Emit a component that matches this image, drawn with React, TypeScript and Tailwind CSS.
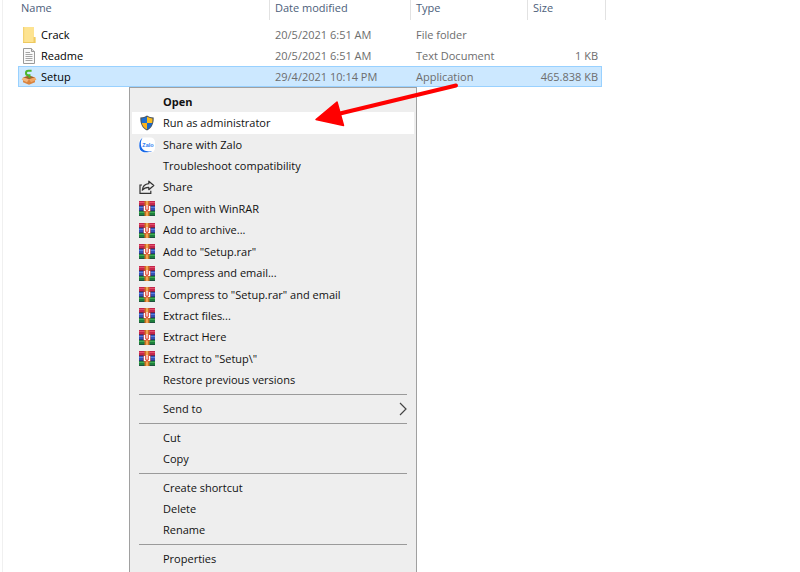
import { Fragment } from 'react';
import type { ReactNode } from 'react';
import clsx from 'clsx';

interface FileRow {
  name: string;
  modified: string;
  type: string;
  size: string;
  icon: ReactNode;
  selected?: boolean;
}

interface MenuEntry {
  label: string;
  icon?: ReactNode;
  bold?: boolean;
  active?: boolean;
  submenu?: boolean;
}

interface MenuGroup {
  height: string;
  items: MenuEntry[];
}

const FolderIcon = () => (
  <svg viewBox="0 0 14 16" className="h-4 w-3.5 shrink-0" aria-hidden="true">
    <path d="M1 0h11v10.500h1.500V16H1z" fill="#fde391" />
    <path d="M1 0h1.200v16H1z" fill="#f3d271" />
    <path d="M11.500 10h2v6h-2z" fill="#f0cb62" />
    <path d="M1 15h12v1H1z" fill="#edc95f" />
  </svg>
);

const TextIcon = () => (
  <svg viewBox="0 0 14 16" className="h-4 w-3.5 shrink-0" aria-hidden="true">
    <path d="M1.500.5h8l3 3v12h-11z" fill="#fafafa" stroke="#9a9a9a" />
    <path d="M9.500.5v3h3" fill="#ddd" stroke="#9a9a9a" />
    <path d="M3.500 4.500H8M3.500 6.500h7M3.500 8.500h7M3.500 10.500h7M3.500 12.500h7" stroke="#a5a5a5" />
  </svg>
);

const SetupIcon = () => (
  <svg viewBox="0 0 14 16" className="h-4 w-3.5 shrink-0 overflow-visible" aria-hidden="true">
    <path d="M1 8.500 7 7l6 1.500v4.800L7 15.800l-6-2.500z" fill="#d98440" />
    <path d="M1 8.500 7 10.500l6-2L7 6.500z" fill="#a3602c" />
    <path d="M1 8.200 7 10.200l-2 3L-.4 10.800z" fill="#f2b57c" />
    <path d="M13 8.200 7 10.200l2 3 5.400-2.400z" fill="#efa766" />
    <path d="M9.600 1.800H6.400C4.600 1.800 4 2.700 4 4s.8 2.200 2.200 2.200h1.300v2.500" fill="none" stroke="#4cb52c" strokeWidth="2" />
  </svg>
);

const ShieldIcon = () => (
  <svg viewBox="0 0 15 16" className="h-4 w-4" aria-hidden="true">
    <path d="M7.500.4C5.800 1.700 3.600 2.300.8 2.400c-.2 6 1.700 10.500 6.700 13.200 5-2.700 6.900-7.200 6.700-13.200C11.400 2.300 9.200 1.700 7.500.4z" fill="#4a5560" />
    <path d="M7.500 1.800v6.200H2.300C2 6.500 2 5 2 3.400c2.200-.1 4-.7 5.500-1.600z" fill="#1e6fd0" />
    <path d="M7.500 1.800v6.200h5.200c.3-1.500.3-3 .3-4.600-2.200-.1-4-.7-5.500-1.600z" fill="#fbbd1e" />
    <path d="M7.500 14.400V8H2.300c.6 2.900 2.200 5 5.200 6.400z" fill="#fbb31a" />
    <path d="M7.500 14.400V8h5.200c-.6 2.900-2.200 5-5.200 6.400z" fill="#1c67c6" />
  </svg>
);

const ZaloIcon = () => (
  <svg viewBox="0 0 16 16" className="h-4 w-4" aria-hidden="true">
    <rect x="0" y=".5" width="16" height="15" rx="4.500" fill="#fff" />
    <path d="M3.500.8C1 2.500.3 5 .3 8.500c0 4.500 2 6.800 6 6.800 3 0 5 0 7-1.200-3 .6-6.300.4-8.300-.8C1.500 11 .8 5 3.500.8z" fill="#1668e8" />
    <text x="9" y="9.500" textAnchor="middle" fontSize="5.500" fontWeight="700" fill="#2f7df0" className="font-['Liberation_Sans',sans-serif]">
      Zalo
    </text>
  </svg>
);

const ShareIcon = () => (
  <svg viewBox="0 0 16 16" className="h-4 w-4" fill="none" stroke="#333" strokeWidth="1.200" aria-hidden="true">
    <path d="M3 6H1v8.400h10.800v-2.600" />
    <path d="M9.800 2.200 14.800 6.500l-5 4.200V8.300C7 8.200 5 9 3.300 11.200 3.700 7.500 6.200 5 9.800 4.700z" strokeLinejoin="round" />
  </svg>
);

const WinRarIcon = () => (
  <svg viewBox="0 0 16 15" className="h-[15px] w-4" aria-hidden="true">
    <path d="M0 0h16v5H0z" fill="#c5264c" />
    <path d="M0 1h16v1H0z" fill="#e2506a" />
    <path d="M0 5h16v5H0z" fill="#3450b4" />
    <path d="M0 6h16v1H0z" fill="#5a80dd" />
    <path d="M0 10h16v5H0z" fill="#1e7f3c" />
    <path d="M0 11h16v1H0z" fill="#42ab55" />
    <path d="M0 4.500h16M0 9.500h16M0 14.500h16" stroke="#1e2440" strokeOpacity=".5" />
    <path d="M5.500 0h5v15h-5z" fill="#cf6f22" />
    <path d="M7 0h2v15H7z" fill="#efa552" />
    <path d="M4.500 4.500h7v6h-7z" fill="#e0523f" />
    <path d="M5.500 5v4.500h1.300M10.500 5v4.500H9.200M8 4v4.500" fill="none" stroke="#fff" strokeWidth="1.200" />
  </svg>
);

const files: FileRow[] = [
  { name: 'Crack', modified: '20/5/2021 6:51 AM', type: 'File folder', size: '', icon: <FolderIcon /> },
  { name: 'Readme', modified: '20/5/2021 6:51 AM', type: 'Text Document', size: '1 KB', icon: <TextIcon /> },
  { name: 'Setup', modified: '29/4/2021 10:14 PM', type: 'Application', size: '465.838 KB', icon: <SetupIcon />, selected: true },
];

const menuGroups: MenuGroup[] = [
  {
    height: 'min-h-[300px]',
    items: [
      { label: 'Open', bold: true },
      { label: 'Run as administrator', icon: <ShieldIcon />, active: true },
      { label: 'Share with Zalo', icon: <ZaloIcon /> },
      { label: 'Troubleshoot compatibility' },
      { label: 'Share', icon: <ShareIcon /> },
      { label: 'Open with WinRAR', icon: <WinRarIcon /> },
      { label: 'Add to archive...', icon: <WinRarIcon /> },
      { label: 'Add to "Setup.rar"', icon: <WinRarIcon /> },
      { label: 'Compress and email...', icon: <WinRarIcon /> },
      { label: 'Compress to "Setup.rar" and email', icon: <WinRarIcon /> },
      { label: 'Extract files...', icon: <WinRarIcon /> },
      { label: 'Extract Here', icon: <WinRarIcon /> },
      { label: 'Extract to "Setup\\"', icon: <WinRarIcon /> },
      { label: 'Restore previous versions' },
    ],
  },
  { height: 'min-h-[22px]', items: [{ label: 'Send to', submenu: true }] },
  { height: 'min-h-[43px]', items: [{ label: 'Cut' }, { label: 'Copy' }] },
  { height: 'min-h-[64px]', items: [{ label: 'Create shortcut' }, { label: 'Delete' }, { label: 'Rename' }] },
  { height: 'min-h-[22px]', items: [{ label: 'Properties' }] },
];

const FileTable = () => {
  const headCell = 'h-[19px] border-r border-[#e2e2e2] p-0 pb-1 pl-[5px] text-left font-normal';

  return (
    <table className="w-[588px] table-fixed border-separate border-spacing-0">
      <colgroup>
        <col className="w-[252px]" />
        <col className="w-[141px]" />
        <col className="w-[117px]" />
        <col className="w-[74px]" />
        <col className="w-1" />
      </colgroup>
      <thead className="text-[#4c607a]">
        <tr>
          <th className="h-[19px] border-r border-[#e2e2e2] p-0 pb-1 pl-[3px] text-left font-normal">Name</th>
          <th className={headCell}>Date modified</th>
          <th className={headCell}>Type</th>
          <th colSpan={2} className={headCell}>Size</th>
        </tr>
        <tr aria-hidden="true">
          <td className="h-1 p-0" />
        </tr>
      </thead>
      <tbody className="text-[#6d6d6d]">
        {files.map((file) => {
          const cell = clsx('h-[21px] border-y p-0', file.selected ? 'border-[#99d1ff] bg-[#cce8ff]' : 'border-transparent');
          return (
            <tr key={file.name}>
              <td className={clsx(cell, 'border-l pl-[3px]')}>
                <div className="flex items-center gap-[5px] text-black">
                  {file.icon}
                  {file.name}
                </div>
              </td>
              <td className={clsx(cell, 'pl-[5px]')}>{file.modified}</td>
              <td className={clsx(cell, 'pl-[5px]')}>{file.type}</td>
              <td className={clsx(cell, 'border-r pr-[3px] text-right')}>{file.size}</td>
            </tr>
          );
        })}
      </tbody>
    </table>
  );
};

const MenuItem = ({ label, icon, bold, active, submenu }: MenuEntry) => (
  <button
    type="button"
    role="menuitem"
    className={clsx('flex w-full items-center gap-2 px-[7px] text-left', bold && 'font-bold', active && 'bg-white')}
  >
    <span className="flex w-4 shrink-0 justify-center">{icon}</span>
    <span className="grow">{label}</span>
    {submenu && (
      <svg viewBox="0 0 8 14" className="h-3.5 w-2" fill="none" stroke="#444" strokeWidth="1.200" aria-hidden="true">
        <path d="M1 1l6 6-6 6" />
      </svg>
    )}
  </button>
);

const ContextMenu = () => (
  <div
    role="menu"
    className="absolute top-[87px] left-[129px] w-72 border border-[#a0a0a0] bg-[#eee] px-0.5 pt-[3px] pb-4 text-[#111]"
  >
    {menuGroups.map((group, index) => (
      <Fragment key={group.items[0].label}>
        {index > 0 && <hr className="mx-[7px] my-[3px] border-t border-[#9a9a9a]" />}
        <div className={clsx('grid auto-rows-fr', group.height)}>
          {group.items.map((item) => (
            <MenuItem key={item.label} {...item} />
          ))}
        </div>
      </Fragment>
    ))}
  </div>
);

// Red arrow pointing at the "Run as administrator" entry
const Arrow = () => (
  <svg viewBox="0 0 150 50" className="pointer-events-none absolute top-20 left-[312px] h-[50px] w-[150px]" aria-hidden="true">
    <path d="M28 33.500 144 5.500" stroke="#f00" strokeWidth="4" strokeLinecap="round" />
    <path d="M4 39.500 25 22 31.500 45.500z" fill="#f00" stroke="#f00" strokeWidth="1.500" strokeLinejoin="round" />
  </svg>
);

export default function App() {
  return (
    <div className="relative h-screen overflow-hidden bg-white font-['Open_Sans',sans-serif] text-[11px] leading-4">
      <main className="ml-0.5 min-h-full border-l border-[#f0f0f0] pl-[15px]">
        <FileTable />
      </main>
      <ContextMenu />
      <Arrow />
    </div>
  );
}
